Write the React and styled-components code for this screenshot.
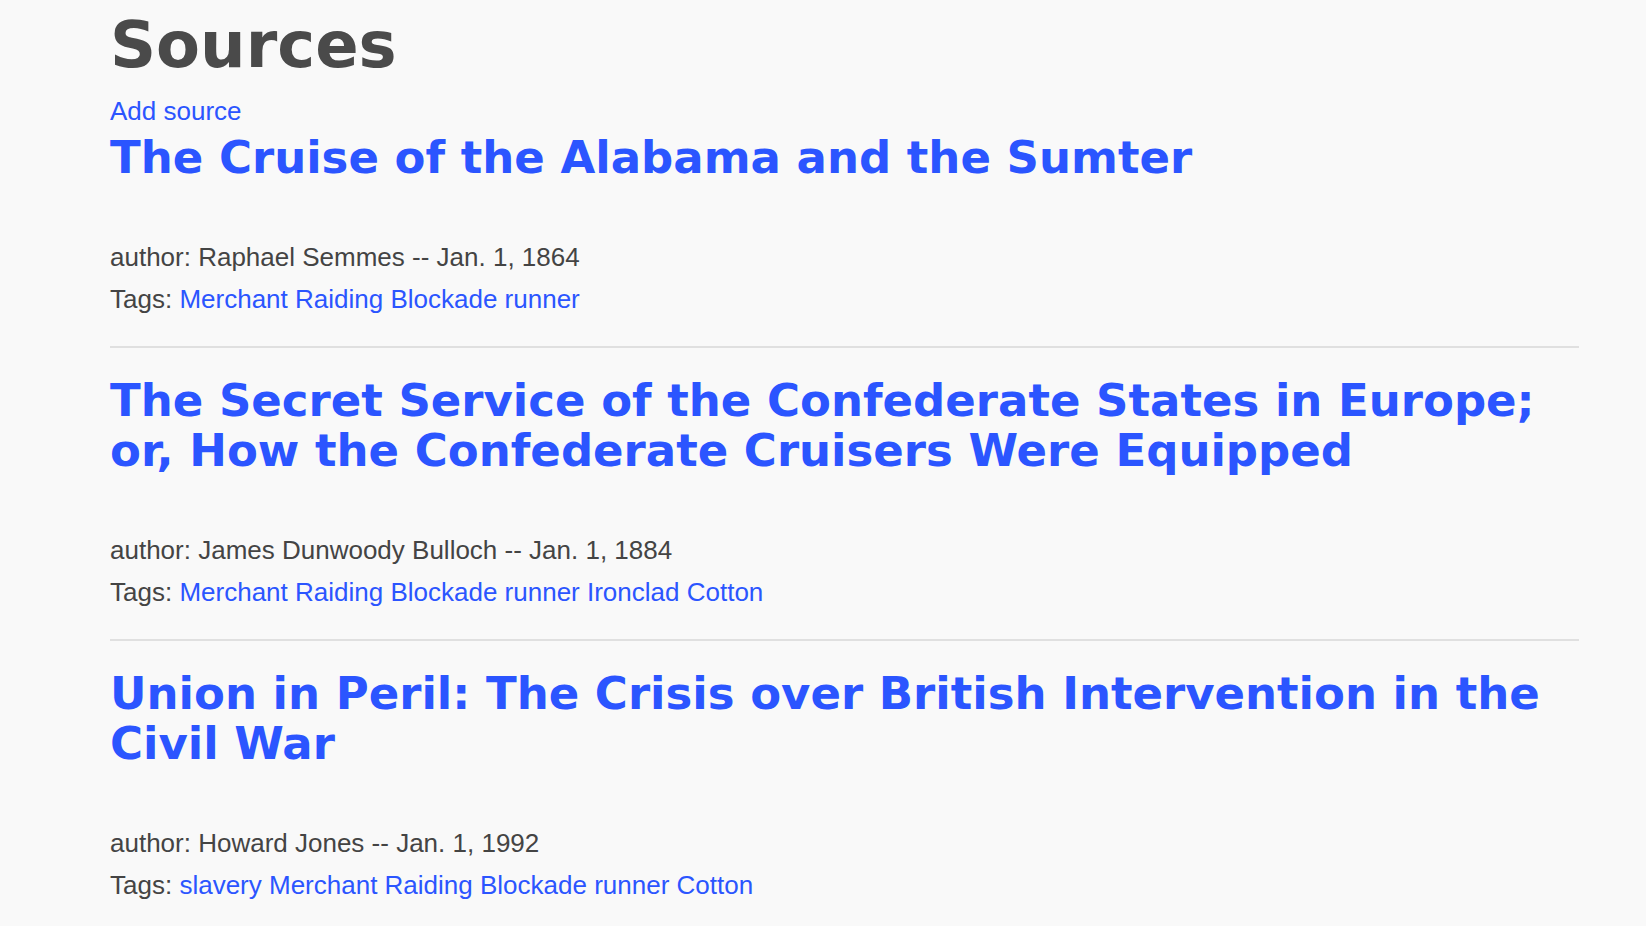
import React from 'react';
import styled, { createGlobalStyle } from 'styled-components';

const GlobalStyle = createGlobalStyle`
  html, body {
    margin: 0;
    padding: 0;
    background: #f9f9f9;
  }
  body {
    font-family: "Liberation Sans", Arial, sans-serif;
    color: #444;
  }
`;

const blue = '#2b55ff';

const Page = styled.main`
  box-sizing: border-box;
  padding: 9px 67px 0 110px;
  min-height: 926px;
`;

const PageTitle = styled.h1`
  margin: 0;
  font-family: "DejaVu Sans", Verdana, sans-serif;
  font-weight: bold;
  font-size: 64px;
  line-height: 72px;
  color: #4a4a4a;
`;

const AddLink = styled.a`
  display: block;
  margin: 14px 0 6px;
  font-size: 26px;
  line-height: 32px;
  color: ${blue};
  text-decoration: none;
`;

const SourceList = styled.div`
  display: flex;
  flex-direction: column;
`;

const Source = styled.article`
  padding-top: ${p => (p.$first ? '0' : '28px')};
  border-bottom: 2px solid #e0e0e0;
`;

const SourceTitle = styled.h2`
  margin: 0 0 53px;
  font-family: "DejaVu Sans", Verdana, sans-serif;
  font-weight: bold;
  font-size: 45px;
  line-height: 50px;

  a {
    color: ${blue};
    text-decoration: none;
  }
`;

const Meta = styled.div`
  margin-bottom: 26px;
  font-size: 26px;
  line-height: 42px;
`;

const Line = styled.p`
  margin: 0;
`;

const Tag = styled.a`
  color: ${blue};
  text-decoration: none;
`;

const sources = [
  {
    title: 'The Cruise of the Alabama and the Sumter',
    author: 'Raphael Semmes',
    date: 'Jan. 1, 1864',
    tags: ['Merchant Raiding', 'Blockade runner']
  },
  {
    title: 'The Secret Service of the Confederate States in Europe; or, How the Confederate Cruisers Were Equipped',
    author: 'James Dunwoody Bulloch',
    date: 'Jan. 1, 1884',
    tags: ['Merchant Raiding', 'Blockade runner', 'Ironclad', 'Cotton']
  },
  {
    title: 'Union in Peril: The Crisis over British Intervention in the Civil War',
    author: 'Howard Jones',
    date: 'Jan. 1, 1992',
    tags: ['slavery', 'Merchant Raiding', 'Blockade runner', 'Cotton']
  }
];

export default function App() {
  return (
    <>
      <GlobalStyle />
      <Page>
        <PageTitle>Sources</PageTitle>
        <AddLink href="#">Add source</AddLink>
        <SourceList>
          {sources.map((s, i) => (
            <Source key={s.title} $first={i === 0}>
              <SourceTitle><a href="#">{s.title}</a></SourceTitle>
              <Meta>
                <Line>author: {s.author} -- {s.date}</Line>
                <Line>
                  Tags:{' '}
                  {s.tags.map((t, j) => (
                    <React.Fragment key={t}>
                      <Tag href="#">{t}</Tag>{j < s.tags.length - 1 ? ' ' : ''}
                    </React.Fragment>
                  ))}
                </Line>
              </Meta>
            </Source>
          ))}
        </SourceList>
      </Page>
    </>
  );
}
